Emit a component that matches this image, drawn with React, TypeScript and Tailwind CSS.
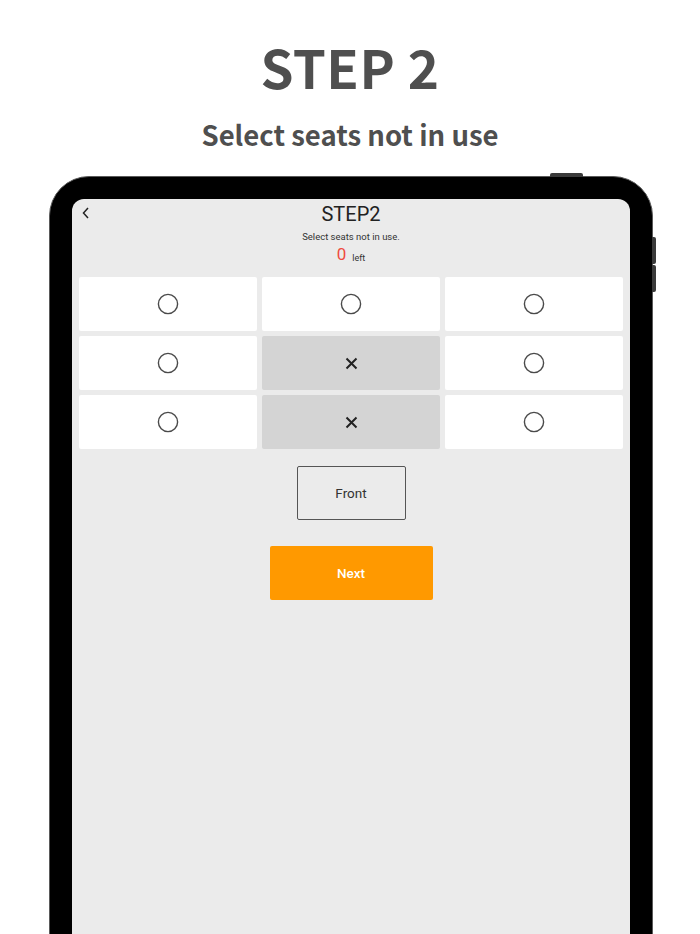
import { useState } from "react";

type Seat = { id: number; blocked: boolean };

const initialSeats: Seat[] = [
    { id: 1, blocked: false }, { id: 2, blocked: false }, { id: 3, blocked: false },
    { id: 4, blocked: false }, { id: 5, blocked: true }, { id: 6, blocked: false },
    { id: 7, blocked: false }, { id: 8, blocked: true }, { id: 9, blocked: false },
];

function SeatCell({ seat, onToggle }: { seat: Seat; onToggle: () => void }) {
    return (
        <button
            onClick={onToggle}
            className={`h-[54px] rounded-[2px] flex items-center justify-center ${seat.blocked ? "bg-[#d4d4d4]" : "bg-white"}`}
        >
            {seat.blocked ? (
                <svg width="13" height="13" viewBox="0 0 13 13">
                    <path d="M1.5 1.5 L11.5 11.5 M11.5 1.5 L1.5 11.5" stroke="#222" strokeWidth="2" />
                </svg>
            ) : (
                <svg width="22" height="22" viewBox="0 0 22 22">
                    <circle cx="11" cy="11" r="9.6" fill="none" stroke="#4a4a4a" strokeWidth="1.4" />
                </svg>
            )}
        </button>
    );
}

export default function App() {
    const [seats, setSeats] = useState(initialSeats);

    const toggle = (id: number) =>
        setSeats(s => s.map(x => (x.id === id ? { ...x, blocked: !x.blocked } : x)));

    return (
        <div className="w-[700px] h-[934px] overflow-hidden bg-white flex flex-col items-center" style={{ fontFamily: "'Noto Sans CJK JP', 'Noto Sans', sans-serif" }}>
            {/* Headline */}
            <h1 className="mt-[40px] text-[53px] leading-[53px] font-bold text-[#4f4f4f] tracking-[0.5px]">STEP 2</h1>
            <p className="mt-[23px] text-[27.5px] leading-[36px] font-bold text-[#4f4f4f]">Select seats not in use</p>

            {/* Tablet */}
            <div className="relative mt-[24px] ml-[2px] w-[604px] shrink-0">
                <div className="absolute right-[70px] -top-[3px] w-[33px] h-[4px] rounded-t-[2px] bg-[#3a3a3a]" />
                <div className="absolute -right-[3px] top-[61px] w-[4px] h-[27px] rounded-r-[2px] bg-[#3a3a3a]" />
                <div className="absolute -right-[3px] top-[89px] w-[4px] h-[27px] rounded-r-[2px] bg-[#3a3a3a]" />

                <div className="h-[800px] rounded-t-[40px] bg-black border-[1.5px] border-[#5a5a5a] px-[22px] pt-[22px]">
                    <div className="h-full rounded-t-[12px] bg-[#ebebeb] flex flex-col items-center" style={{ fontFamily: "Roboto, 'Liberation Sans', sans-serif" }}>
                        {/* Header */}
                        <div className="relative w-full flex justify-center pt-[2px]">
                            <button className="absolute left-[9px] top-[7px]">
                                <svg width="10" height="14" viewBox="0 0 10 14">
                                    <path d="M7 2 L2.5 7 L7 12" fill="none" stroke="#222" strokeWidth="1.5" />
                                </svg>
                            </button>
                            <span className="text-[20px] leading-[26px] text-[#222]">STEP2</span>
                        </div>
                        <p className="mt-[4px] text-[9.5px] leading-[12px] text-[#333]">Select seats not in use.</p>
                        <div className="mt-[2px] flex items-end gap-[6px]">
                            <span className="text-[17px] leading-[18px] text-[#ef4b3f]">0</span>
                            <span className="text-[9px] leading-[12px] text-[#333] mb-[-1px]">left</span>
                        </div>

                        {/* Seats */}
                        <div className="mt-[14px] w-full px-[7px] grid grid-cols-3 gap-[5px]">
                            {seats.map(seat => (
                                <SeatCell key={seat.id} seat={seat} onToggle={() => toggle(seat.id)} />
                            ))}
                        </div>

                        <div className="mt-[17px] w-[109px] h-[54px] rounded-[2px] border border-[#555] flex items-center justify-center text-[13.5px] text-[#333]">
                            Front
                        </div>

                        <button className="mt-[26px] w-[163px] h-[54px] rounded-[2px] bg-[#ff9900] text-white text-[13.5px] font-medium">
                            Next
                        </button>
                    </div>
                </div>
            </div>
        </div>
    );
}
